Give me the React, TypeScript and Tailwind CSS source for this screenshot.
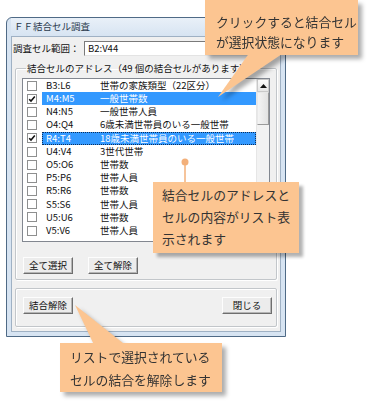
import React from "react";

type Row = { addr: string; text: string; checked?: boolean; selected?: boolean; focus?: boolean };

const ROWS: Row[] = [
  { addr: "B3:L6", text: "世帯の家族類型（22区分）" },
  { addr: "M4:M5", text: "一般世帯数", checked: true, selected: true },
  { addr: "N4:N5", text: "一般世帯人員" },
  { addr: "O4:Q4", text: "6歳未満世帯員のいる一般世帯" },
  { addr: "R4:T4", text: "18歳未満世帯員のいる一般世帯", checked: true, selected: true, focus: true },
  { addr: "U4:V4", text: "3世代世帯" },
  { addr: "O5:O6", text: "世帯数" },
  { addr: "P5:P6", text: "世帯人員" },
  { addr: "R5:R6", text: "世帯数" },
  { addr: "S5:S6", text: "世帯人員" },
  { addr: "U5:U6", text: "世帯数" },
  { addr: "V5:V6", text: "世帯人員" },
];

function Btn({ label }: { label: string }) {
  return (
    <button className="w-[50px] h-[17px] flex items-center justify-center bg-[#ececec] border border-t-[#fdfdfd] border-l-[#fdfdfd] border-b-[#6e6e6e] border-r-[#6e6e6e] shadow-[inset_-1px_-1px_0_#b5b5b5] text-[9.5px] leading-none text-[#111]">
      {label}
    </button>
  );
}

function Check({ on }: { on?: boolean }) {
  return (
    <div className="w-[10px] h-[10px] border border-[#8e8f8f] bg-white flex items-center justify-center">
      {on ? (
        <svg width="8" height="8" viewBox="0 0 8 8">
          <path d="M1.2 4.2 L3 6 L6.8 1.6" fill="none" stroke="#111" strokeWidth="1.6" />
        </svg>
      ) : null}
    </div>
  );
}

export default function App() {
  return (
    <div
      className="relative w-[376px] h-[404px] bg-white overflow-hidden text-[#111]"
      style={{ fontFamily: '"Noto Sans CJK JP", "Noto Sans", sans-serif' }}
    >
      {/* dialog window */}
      <div className="ml-[6px] mt-[17px] w-[280px] h-[320px] rounded-t-[6px] border border-[#4f6a86] bg-[#d7e4f2] flex flex-col px-[4px] pb-[4px]">
        <div className="h-[18px] flex items-center pl-[3px] text-[9.5px] leading-none text-[#2a3a4c] bg-gradient-to-b from-[#e9f0f8] to-[#d7e4f2]">
          ＦＦ結合セル調査
        </div>
        <div className="flex-1 bg-[#f0f0f0] border border-[#9fb1c4] flex flex-col">
          <div className="mt-[4px] h-[15px] flex items-center">
            <div className="w-[72px] pl-[1px] text-[9.5px] leading-none">調査セル範囲：</div>
            <div className="w-[192px] h-[15px] bg-white border border-[#7a7a7a] border-b-[#e3e3e3] border-r-[#e3e3e3] flex items-center pl-[3px] text-[9.5px] leading-none">
              B2:V44
            </div>
          </div>

          <fieldset className="mt-[6px] ml-[3px] mr-[3px] border border-[#c2c6ca] shadow-[inset_1px_1px_0_#fff,1px_1px_0_#fff] rounded-[2px]">
            <legend className="ml-[10px] px-[1px] h-[12px] text-[9.5px] leading-[12px]">
              結合セルのアドレス（49 個の結合セルがあります）
            </legend>
            <div className="mt-[4px] mx-[6px] h-[164px] bg-white border border-[#828790] flex">
              <div className="flex-1 flex flex-col">
                {ROWS.map((r) => (
                  <div key={r.addr} className="h-[13.2px] flex items-center">
                    <div className="w-[19px] pl-[4px] flex items-center">
                      <Check on={r.checked} />
                    </div>
                    <div
                      className={`flex-1 h-full flex items-center pl-[4px] text-[9.5px] leading-none whitespace-nowrap overflow-hidden ${
                        r.selected ? "bg-[#3399ff] text-white" : ""
                      } ${r.focus ? "outline outline-1 outline-dotted outline-[#0d2f5a] -outline-offset-1" : ""}`}
                    >
                      <span className="w-[54px]">{r.addr}</span>
                      <span>{r.text}</span>
                    </div>
                  </div>
                ))}
              </div>
              <div className="w-[13px] bg-[#f2f2f2] border-l border-[#e6e6e6] flex flex-col">
                <div className="h-[13px] bg-gradient-to-b from-[#fbfbfb] to-[#e6e6e6] border border-[#c9c9c9] flex items-center justify-center">
                  <svg width="7" height="4" viewBox="0 0 7 4">
                    <path d="M0 4 L3.5 0 L7 4 Z" fill="#111" />
                  </svg>
                </div>
                <div className="h-[33px] bg-gradient-to-r from-[#f4f4f4] to-[#e2e2e2] border border-[#9a9a9a] border-t-[#e8e8e8] border-l-[#e8e8e8]" />
              </div>
            </div>
            <div className="mt-[15px] ml-[7px] mb-[5px] flex gap-[15px]">
              <Btn label="全て選択" />
              <Btn label="全て解除" />
            </div>
          </fieldset>

          <fieldset className="mt-[8px] ml-[3px] mr-[3px] border border-[#c2c6ca] shadow-[inset_1px_1px_0_#fff,1px_1px_0_#fff] rounded-[2px] pt-[8px] pb-[12px] pl-[7px] pr-[3px] flex justify-between">
            <div className="flex justify-between">
              <Btn label="結合解除" />
              <div className="w-[149px]" />
              <Btn label="閉じる" />
            </div>
          </fieldset>
        </div>
      </div>

      {/* callout 1 */}
      <div className="absolute left-[205px] top-0 w-[153px] h-[55px] [filter:drop-shadow(4px_4px_2px_rgba(0,0,0,0.32))]">
        <svg className="absolute left-0 top-[52px]" width="85" height="48" viewBox="0 0 85 48">
          <polygon points="45,0 80,0 13,45" fill="#fcc591" />
        </svg>
        <div className="relative h-full bg-[#fcc591] pl-[11px] pt-[12px] text-[12.8px] leading-[20px] text-[#333] whitespace-nowrap">
          <div>クリックすると結合セル</div>
          <div>が選択状態になります</div>
        </div>
      </div>

      {/* callout 2 */}
      <svg className="absolute left-[180px] top-[157px]" width="10" height="27" viewBox="0 0 10 27">
        <circle cx="5" cy="5" r="3.5" fill="#f3b07a" />
        <line x1="5" y1="7" x2="5" y2="27" stroke="#f3b07a" strokeWidth="1.5" />
      </svg>
      <div className="absolute left-[153px] top-[182px] w-[146px] h-[71px] bg-[#fcc591] pl-[9px] pt-[2px] text-[12.8px] leading-[22px] text-[#333] whitespace-nowrap shadow-[4px_4px_3px_rgba(0,0,0,0.3)]">
        <div>結合セルのアドレスと</div>
        <div>セルの内容がリスト表</div>
        <div>示されます</div>
      </div>

      {/* callout 3 */}
      <div className="absolute left-[60px] top-[343px] w-[162px] h-[49px] [filter:drop-shadow(4px_4px_2px_rgba(0,0,0,0.32))]">
        <svg className="absolute left-0 top-[-40px]" width="70" height="44" viewBox="0 0 70 44">
          <polygon points="15,2 35,44 68,44" fill="#fcc591" />
        </svg>
        <div className="relative h-full bg-[#fcc591] pl-[10px] pt-[2px] text-[12.8px] leading-[23px] text-[#333] whitespace-nowrap">
          <div>リストで選択されている</div>
          <div>セルの結合を解除します</div>
        </div>
      </div>
    </div>
  );
}
